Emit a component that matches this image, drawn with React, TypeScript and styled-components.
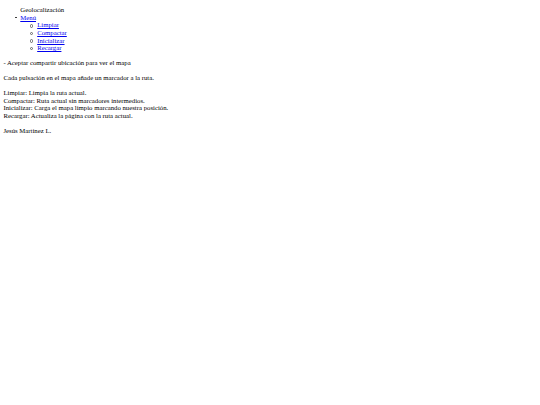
import React from "react";
import styled, { createGlobalStyle } from "styled-components";

const GlobalStyle = createGlobalStyle`
  body {
    margin: 3.4px;
    background: #ffffff;
    color: #000000;
    font-family: "Liberation Serif", "Times New Roman", serif;
    font-size: 6.75px;
    line-height: 7.6px;
  }
`;

const Nav = styled.ul({
  margin: "2.8px 0 6.8px",
  paddingLeft: "16.9px",
  listStyle: "none",
});

const Title = styled.li({
  listStyle: "none",
});

const MenuItem = styled.li({
  position: "relative",
  "&::before": {
    content: '""',
    position: "absolute",
    left: "-5px",
    top: "3px",
    width: "1.7px",
    height: "1.7px",
    borderRadius: "50%",
    background: "#222222",
  },
});

const SubMenu = styled.ul({
  margin: 0,
  paddingLeft: "16.9px",
  listStyle: "none",
});

const SubItem = styled.li({
  position: "relative",
  "&::before": {
    content: '""',
    position: "absolute",
    left: "-7.3px",
    top: "2.8px",
    width: "1.4px",
    height: "1.4px",
    borderRadius: "50%",
    border: "0.5px solid #666666",
  },
});

const Link = styled.a({
  color: "#0000ee",
  textDecoration: "underline",
});

const Text = styled.p({
  margin: "7.4px 0",
});

const items = ["Limpiar", "Compactar", "Inicializar", "Recargar"];

const App = () => {
  return (
    <>
      <GlobalStyle />
      <Nav>
        <Title>Geolocalización</Title>
        <MenuItem>
          <Link href="#">Menú</Link>
          <SubMenu>
            {items.map((item) => (
              <SubItem key={item}>
                <Link href="#">{item}</Link>
              </SubItem>
            ))}
          </SubMenu>
        </MenuItem>
      </Nav>
      <Text>- Aceptar compartir ubicación para ver el mapa</Text>
      <Text>Cada pulsación en el mapa añade un marcador a la ruta.</Text>
      <Text>
        Limpiar: Limpia la ruta actual.
        <br />
        Compactar: Ruta actual sin marcadores intermedios.
        <br />
        Inicializar: Carga el mapa limpio marcando nuestra posición.
        <br />
        Recargar: Actualiza la página con la ruta actual.
      </Text>
      <Text>Jesús Martínez L.</Text>
    </>
  );
};

export default App;
